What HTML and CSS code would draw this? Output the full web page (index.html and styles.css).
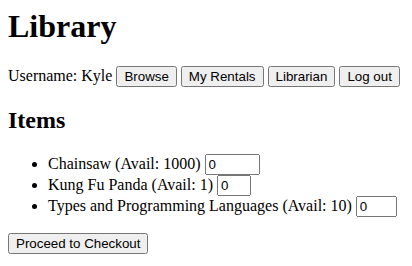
FILE: index.html
```html
<!DOCTYPE html>
<html lang="en">
<head>
  <meta charset="UTF-8" />
  <title>Library</title>
  <link rel="stylesheet" href="styles.css">
</head>
<body>
  <h1>Library</h1>
  <div class="user-bar">
    Username: Kyle
    <button>Browse</button>
    <button>My Rentals</button>
    <button>Librarian</button>
    <button>Log out</button>
  </div>

  <h2>Items</h2>
  <ul class="items">
    <li>Chainsaw (Avail: 1000) <input class="qty" type="text" value="0" style="width: 55px"></li>
    <li>Kung Fu Panda (Avail: 1) <input class="qty" type="text" value="0" style="width: 34px"></li>
    <li>Types and Programming Languages (Avail: 10) <input class="qty" type="text" value="0" style="width: 41px"></li>
  </ul>
  <button>Proceed to Checkout</button>
</body>
</html>
```

FILE: styles.css
```css
body {
  margin: 8px;
  font-family: 'Liberation Serif', 'Times New Roman', serif;
  font-size: 16px;
  color: #000;
  background: #fff;
}

h1 {
  font-size: 32px;
  margin-top: 0;
}

button,
input {
  font-family: 'Liberation Sans', Arial, sans-serif;
  font-size: 13.33px;
}

.qty {
  box-sizing: border-box;
}
```
